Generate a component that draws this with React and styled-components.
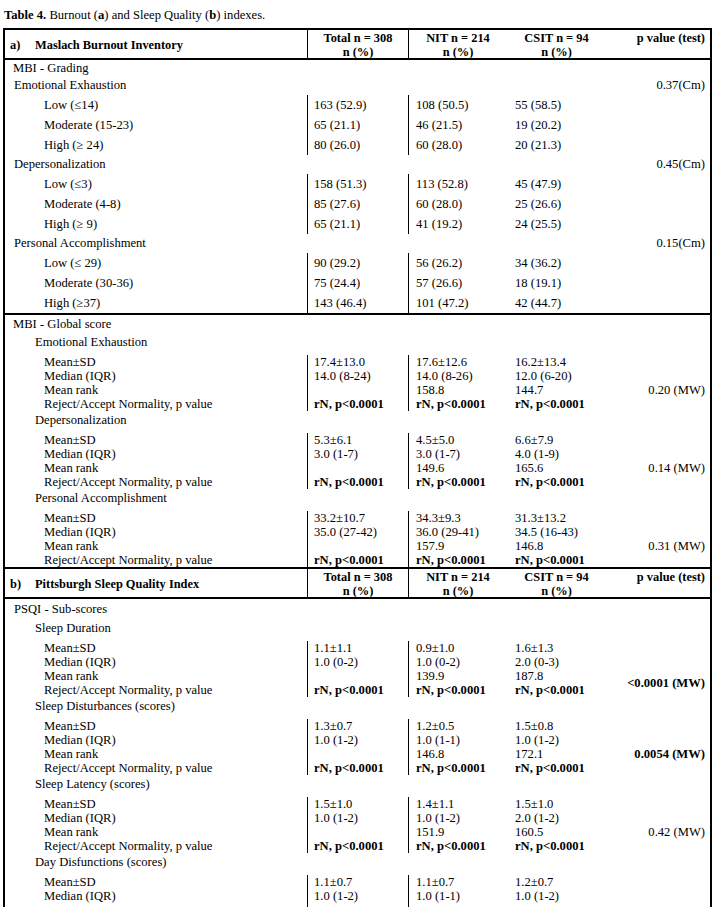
import styled, { createGlobalStyle } from "styled-components";

const GlobalStyle = createGlobalStyle`
  body {
    margin: 0;
    background: #fff;
    color: #000;
    font-family: "Liberation Serif", "Times New Roman", serif;
    font-size: 12.6px;
  }
`;

const COLS = "302px 101px 99px 99px 1fr";

const Page = styled.div`
  width: 715px;
  height: 907px;
  overflow: hidden;
  padding: 8px 0 0 3px;
  box-sizing: border-box;
`;

const Caption = styled.div`
  line-height: 14px;
  margin: 0 0 6px 1px;
  b { font-weight: bold; }
`;

const Table = styled.div`
  width: 709px;
  border: 2px solid #000;
  border-bottom: none;
  box-sizing: border-box;
`;

const Section = styled.div`
  border-bottom: ${(p) => (p.$open ? "none" : "2px solid #000")};
`;

const HeadRow = styled.div`
  display: grid;
  grid-template-columns: ${COLS};
  height: 28px;
  border-bottom: 2px solid #000;
  font-weight: bold;
  font-size: 12.4px;
`;

const HeadTitle = styled.div`
  display: flex;
  align-items: center;
  padding-left: 5px;
  padding-top: 1px;
`;

const Tag = styled.span`
  width: 25px;
`;

const HeadCell = styled.div`
  border-left: ${(p) => (p.$line ? "1px solid #000" : "none")};
  text-align: ${(p) => (p.$right ? "right" : "center")};
  padding-right: ${(p) => (p.$right ? "5px" : "0")};
  line-height: 14px;
  padding-top: 1px;
`;

const Row = styled.div`
  display: grid;
  grid-template-columns: ${COLS};
  height: ${(p) => p.$h}px;
  align-items: center;
`;

const Label = styled.div`
  padding-left: ${(p) => p.$indent}px;
  white-space: nowrap;
`;

const PCell = styled.div`
  grid-column: 5;
  text-align: right;
  padding-right: 5px;
  padding-top: ${(p) => p.$top || 0}px;
  font-weight: ${(p) => (p.$bold ? "bold" : "normal")};
  white-space: nowrap;
`;

const Block = styled.div`
  display: grid;
  grid-template-columns: ${COLS};
  padding-top: ${(p) => p.$pt}px;
  line-height: ${(p) => p.$lh}px;
`;

const Col = styled.div`
  border-left: ${(p) => (p.$line ? "1px solid #000" : "none")};
  padding-left: ${(p) => p.$pl}px;
  padding-bottom: ${(p) => p.$pb || 0}px;
  white-space: nowrap;
`;

const Line = styled.div`
  height: ${(p) => p.$lh}px;
  font-weight: ${(p) => (p.$bold ? "bold" : "normal")};
`;

const grading = [
  {
    title: "Emotional Exhaustion",
    p: "0.37(Cm)",
    rows: [
      ["Low (≤14)", "163 (52.9)", "108 (50.5)", "55 (58.5)"],
      ["Moderate (15-23)", "65 (21.1)", "46 (21.5)", "19 (20.2)"],
      ["High (≥ 24)", "80 (26.0)", "60 (28.0)", "20 (21.3)"],
    ],
  },
  {
    title: "Depersonalization",
    p: "0.45(Cm)",
    rows: [
      ["Low (≤3)", "158 (51.3)", "113 (52.8)", "45 (47.9)"],
      ["Moderate (4-8)", "85 (27.6)", "60 (28.0)", "25 (26.6)"],
      ["High (≥ 9)", "65 (21.1)", "41 (19.2)", "24 (25.5)"],
    ],
  },
  {
    title: "Personal Accomplishment",
    p: "0.15(Cm)",
    rows: [
      ["Low (≤ 29)", "90 (29.2)", "56 (26.2)", "34 (36.2)"],
      ["Moderate (30-36)", "75 (24.4)", "57 (26.6)", "18 (19.1)"],
      ["High (≥37)", "143 (46.4)", "101 (47.2)", "42 (44.7)"],
    ],
  },
];

const RN = "rN, p<0.0001";
const statLabels = ["Mean±SD", "Median (IQR)", "Mean rank", "Reject/Accept Normality, p value"];

const mbiGlobal = [
  {
    title: "Emotional Exhaustion",
    p: "0.20 (MW)",
    vals: [
      ["17.4±13.0", "14.0 (8-24)", "", RN],
      ["17.6±12.6", "14.0 (8-26)", "158.8", RN],
      ["16.2±13.4", "12.0 (6-20)", "144.7", RN],
    ],
  },
  {
    title: "Depersonalization",
    p: "0.14 (MW)",
    vals: [
      ["5.3±6.1", "3.0 (1-7)", "", RN],
      ["4.5±5.0", "3.0 (1-7)", "149.6", RN],
      ["6.6±7.9", "4.0 (1-9)", "165.6", RN],
    ],
  },
  {
    title: "Personal Accomplishment",
    p: "0.31 (MW)",
    vals: [
      ["33.2±10.7", "35.0 (27-42)", "", RN],
      ["34.3±9.3", "36.0 (29-41)", "157.9", RN],
      ["31.3±13.2", "34.5 (16-43)", "146.8", RN],
    ],
  },
];

const psqi = [
  {
    title: "Sleep Duration",
    p: "<0.0001 (MW)",
    bold: true,
    top: 35,
    vals: [
      ["1.1±1.1", "1.0 (0-2)", "", RN],
      ["0.9±1.0", "1.0 (0-2)", "139.9", RN],
      ["1.6±1.3", "2.0 (0-3)", "187.8", RN],
    ],
  },
  {
    title: "Sleep Disturbances (scores)",
    p: "0.0054 (MW)",
    bold: true,
    vals: [
      ["1.3±0.7", "1.0 (1-2)", "", RN],
      ["1.2±0.5", "1.0 (1-1)", "146.8", RN],
      ["1.5±0.8", "1.0 (1-2)", "172.1", RN],
    ],
  },
  {
    title: "Sleep Latency (scores)",
    p: "0.42 (MW)",
    vals: [
      ["1.5±1.0", "1.0 (1-2)", "", RN],
      ["1.4±1.1", "1.0 (1-2)", "151.9", RN],
      ["1.5±1.0", "2.0 (1-2)", "160.5", RN],
    ],
  },
  {
    title: "Day Disfunctions (scores)",
    p: "",
    labels: ["Mean±SD", "Median (IQR)"],
    pb: 30,
    vals: [
      ["1.1±0.7", "1.0 (1-2)"],
      ["1.1±0.7", "1.0 (1-1)"],
      ["1.2±0.7", "1.0 (1-2)"],
    ],
  },
];

const Header = ({ tag, title }) => (
  <HeadRow>
    <HeadTitle>
      <Tag>{tag}</Tag>
      {title}
    </HeadTitle>
    <HeadCell $line>Total n = 308<br />n (%)</HeadCell>
    <HeadCell $line>NIT n = 214<br />n (%)</HeadCell>
    <HeadCell>CSIT n = 94<br />n (%)</HeadCell>
    <HeadCell $right>p value (test)</HeadCell>
  </HeadRow>
);

const ValueCols = ({ cols, lh, boldLast, pb }) => (
  <>
    {cols.map((vals, i) => (
      <Col key={i} $line={i < 2} $pl={i === 0 ? 6 : i === 1 ? 7 : 8} $pb={pb}>
        {vals.map((v, j) => (
          <Line key={j} $lh={lh} $bold={boldLast && j === 3}>
            {v}
          </Line>
        ))}
      </Col>
    ))}
  </>
);

const GradingGroup = ({ g }) => (
  <>
    <Row $h={19}>
      <Label $indent={9}>{g.title}</Label>
      <PCell>{g.p}</PCell>
    </Row>
    <Block $pt={0} $lh={20}>
      <Col $pl={39}>
        {g.rows.map((r) => (
          <Line key={r[0]} $lh={20}>{r[0]}</Line>
        ))}
      </Col>
      <ValueCols cols={[1, 2, 3].map((c) => g.rows.map((r) => r[c]))} lh={20} />
    </Block>
  </>
);

const StatGroup = ({ g }) => (
  <>
    <Row $h={19}>
      <Label $indent={30}>{g.title}</Label>
    </Row>
    <Block $pt={3} $lh={14}>
      <Col $pl={39}>
        {(g.labels || statLabels).map((l) => (
          <Line key={l} $lh={14}>{l}</Line>
        ))}
      </Col>
      <ValueCols cols={g.vals} lh={14} boldLast pb={g.pb} />
      <PCell $top={g.top || 28} $bold={g.bold}>{g.p}</PCell>
    </Block>
  </>
);

export default function App() {
  return (
    <Page>
      <GlobalStyle />
      <Caption>
        <b>Table 4.</b> Burnout (<b>a</b>) and Sleep Quality (<b>b</b>) indexes.
      </Caption>
      <Table>
        <Header tag="a)" title="Maslach Burnout Inventory" />
        <Section>
          <Row $h={16}>
            <Label $indent={8}>MBI - Grading</Label>
          </Row>
          {grading.map((g) => (
            <GradingGroup key={g.title} g={g} />
          ))}
        </Section>
        <Section>
          <Row $h={18}>
            <Label $indent={8}>MBI - Global score</Label>
          </Row>
          {mbiGlobal.map((g) => (
            <StatGroup key={g.title} g={g} />
          ))}
        </Section>
        <Header tag="b)" title="Pittsburgh Sleep Quality Index" />
        <Section $open>
          <Row $h={20}>
            <Label $indent={9}>PSQI - Sub-scores</Label>
          </Row>
          {psqi.map((g) => (
            <StatGroup key={g.title} g={g} />
          ))}
        </Section>
      </Table>
    </Page>
  );
}
